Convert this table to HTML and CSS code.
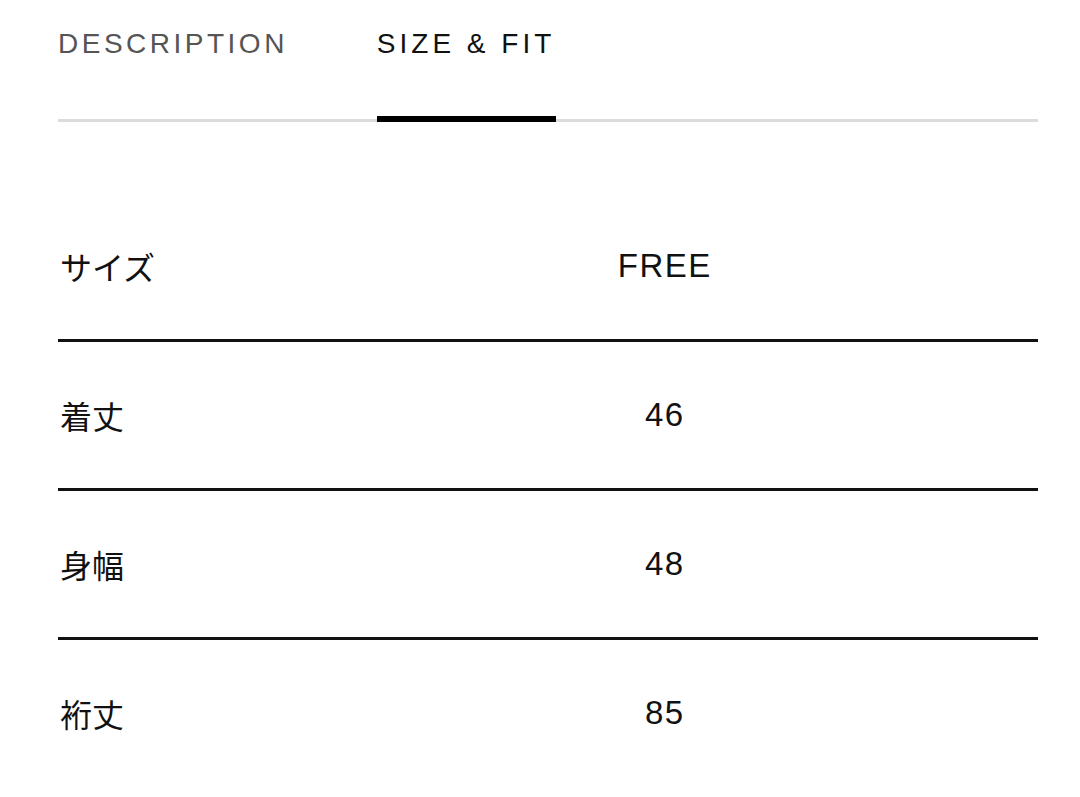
FILE: index.html
```html
<!DOCTYPE html>
<html lang="ja">
<head>
<meta charset="utf-8">
<link rel="stylesheet" href="styles.css">
</head>
<body>
<div class="page">
  <div class="tabs">
    <div class="tab">DESCRIPTION</div>
    <div class="tab active">SIZE &amp; FIT</div>
  </div>
  <div class="table">
    <div class="row"><div class="label">サイズ</div><div class="value">FREE</div></div>
    <div class="row"><div class="label">着丈</div><div class="value">46</div></div>
    <div class="row"><div class="label">身幅</div><div class="value">48</div></div>
    <div class="row"><div class="label">裄丈</div><div class="value">85</div></div>
  </div>
</div>
</body>
</html>
```
FILE: styles.css
```css
html, body {
  margin: 0;
  padding: 0;
  background: #ffffff;
}
body {
  font-family: "Liberation Sans", "Noto Sans CJK JP", sans-serif;
  color: #111111;
}
.page {
  padding: 28px 42px 0 58px;
}
.tabs {
  display: flex;
  gap: 89px;
  border-bottom: 3px solid #dcdcdc;
}
.tab {
  font-size: 28px;
  line-height: 32px;
  letter-spacing: 3.5px;
  color: #555555;
  padding-bottom: 56px;
  border-bottom: 6px solid transparent;
  margin-bottom: -3px;
}
.tab.active {
  color: #111111;
  letter-spacing: 4px;
  padding-right: 1px;
  border-bottom-color: #000000;
}
.table {
  margin-top: 71px;
}
.row {
  display: grid;
  grid-template-columns: 232px 1fr;
  align-items: center;
  padding: 55px 0;
  font-size: 32px;
  line-height: 36px;
  border-bottom: 3px solid #111111;
}
.row:last-child {
  border-bottom: none;
}
.label {
  font-family: "Noto Sans CJK JP", sans-serif;
  font-weight: 400;
  padding-left: 2px;
}
.value {
  text-align: center;
  font-size: 33px;
  letter-spacing: 1.5px;
  padding-left: 1.5px;
}
```
